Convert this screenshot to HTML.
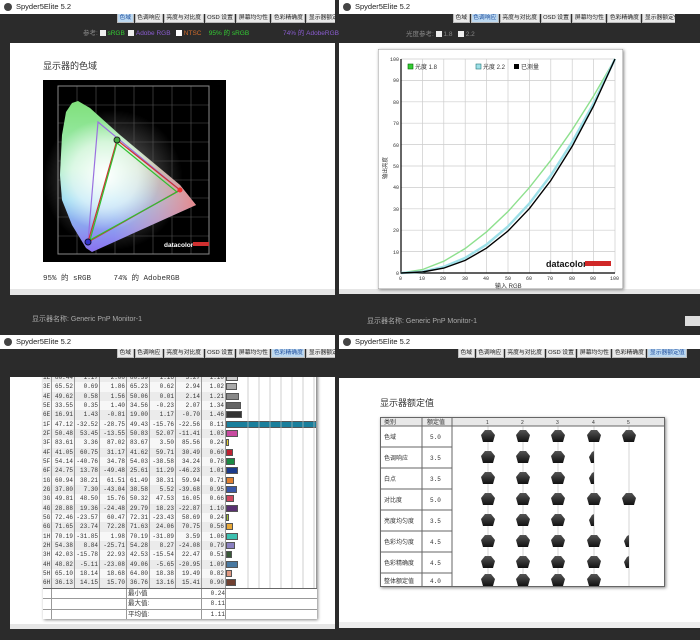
<!DOCTYPE html>
<html><head><meta charset="utf-8">
<style>
*{margin:0;padding:0;box-sizing:border-box}
body{width:700px;height:640px;background:#2b2b2b;position:relative;overflow:hidden;font-family:"Liberation Sans","Noto Sans CJK SC",sans-serif;color:#333}
.a{position:absolute}
.title{background:#fff;height:14px;font-size:7.5px;line-height:14px;color:#222;padding-left:16px}
.title:before{content:"";position:absolute;left:4px;top:3px;width:8px;height:8px;border-radius:50%;background:#444}
.tabs{display:flex;height:9px;font-size:5.8px;line-height:9px;white-space:nowrap;overflow:hidden}
.tabs span{flex:none;background:#e9e9e9;color:#222;margin-right:1px;padding:0 1.5px;border:1px solid #bbb;border-top:none;line-height:8px}
.tabs span.s{background:#bcd8f0;color:#1f4f9f}
.white{background:#fff}
.mono{font-family:"Liberation Mono","Noto Sans CJK SC",monospace}
.row{display:flex;height:9.33px;font-size:6px;line-height:9.33px;font-family:"Liberation Mono",monospace;color:#333}
.row span{border-right:1px solid #999;text-align:right;padding-right:1px;overflow:hidden}
.row:nth-child(odd){background:#ebebeb}
.row:nth-child(even){background:#f7f7f7}
.bar{position:relative;background:#fff;text-align:left!important}
.bar i{position:absolute;left:0;top:1px;height:7px;border:1px solid #555}
.lbl{color:#aaa;font-size:7px}
</style></head><body>

<!-- ===== TOP LEFT ===== -->
<div class="a title" style="left:0;top:0;width:335px">Spyder5Elite 5.2</div>
<div class="a tabs" style="left:117px;top:14px;width:218px"><span class="s">色域</span><span>色调响应</span><span>亮度与对比度</span><span>OSD 设置</span><span>屏幕均匀性</span><span>色彩精确度</span><span>显示器额定值</span></div>
<div class="a" style="left:83px;top:30px;font-size:6.5px;white-space:nowrap;color:#888;line-height:8px">参考: <b style="display:inline-block;width:6px;height:6px;background:#eee;vertical-align:-1px"></b> <span style="color:#3c3">sRGB</span>&nbsp;&nbsp;<b style="display:inline-block;width:6px;height:6px;background:#eee;vertical-align:-1px"></b> <span style="color:#8a5cd0">Adobe RGB</span>&nbsp;&nbsp;&nbsp;<b style="display:inline-block;width:6px;height:6px;background:#fff;vertical-align:-1px"></b> <span style="color:#d06a2a">NTSC</span>&nbsp;&nbsp;&nbsp;&nbsp;<span style="color:#3c3">95% 的 sRGB</span></div>
<div class="a" style="left:283px;top:30px;font-size:6.5px;color:#8a5cd0;line-height:8px;white-space:nowrap">74% 的 AdobeRGB</div>
<div class="a white" style="left:10px;top:43px;width:325px;height:247px"></div>
<div class="a" style="left:10px;top:289px;width:325px;height:6px;background:#e6e6e6"></div>
<div class="a" style="left:43px;top:59px;font-size:9px;color:#333">显示器的色域</div>
<svg class="a" style="left:43px;top:80px" width="183" height="182" viewBox="0 0 183 182">
<defs>
<linearGradient id="gv" x1="0" y1="0" x2="0" y2="1"><stop offset="0" stop-color="#7fe07a"/><stop offset=".45" stop-color="#a8eec0"/><stop offset=".65" stop-color="#8fd8f0"/><stop offset="1" stop-color="#8a70f0"/></linearGradient>
<linearGradient id="gh" x1="0" y1="0" x2="1" y2="0"><stop offset=".4" stop-color="#f0a0c0" stop-opacity="0"/><stop offset="1" stop-color="#f08080" stop-opacity=".9"/></linearGradient>
<radialGradient id="gw" cx="62" cy="95" r="55" gradientUnits="userSpaceOnUse"><stop offset="0" stop-color="#fff"/><stop offset=".6" stop-color="#fff" stop-opacity=".6"/><stop offset="1" stop-color="#fff" stop-opacity="0"/></radialGradient>
<radialGradient id="gg" cx="70" cy="100" r="70" gradientUnits="userSpaceOnUse"><stop offset="0" stop-color="#fff" stop-opacity=".5"/><stop offset="1" stop-color="#fff" stop-opacity="0"/></radialGradient>
</defs>
<rect width="183" height="182" fill="#000"/>
<circle cx="70" cy="100" r="70" fill="url(#gg)"/>
<g stroke="#555" stroke-width=".6">
<path d="M34 6V174M53 6V174M72 6V174M91 6V174M110 6V174M129 6V174M148 6V174M15 25H166M15 43H166M15 62H166M15 81H166M15 100H166M15 118H166M15 137H166M15 156H166"/>
</g>
<rect x="15" y="6" width="151" height="168" fill="none" stroke="#888"/>
<polygon points="17,95 19,55 23,32 29,23 35,21 47,28 77,55 107,80 137,105 153,125 49,172 43,168 29,145 19,120" fill="url(#gv)"/>
<polygon points="17,95 19,55 23,32 29,23 35,21 47,28 77,55 107,80 137,105 153,125 49,172 43,168 29,145 19,120" fill="url(#gh)"/>
<polygon points="17,95 19,55 23,32 29,23 35,21 47,28 77,55 107,80 137,105 153,125 49,172 43,168 29,145 19,120" fill="url(#gw)"/>
<polygon points="55,42 137,110 45,162" fill="none" stroke="#9a70e0" stroke-width="1.2"/>
<polygon points="74,60 137,110 45,162" fill="none" stroke="#d03030" stroke-width="1.2"/>
<polygon points="74,63 134,112 47,160" fill="none" stroke="#30c030" stroke-width="1.2"/>
<circle cx="74" cy="60" r="3" fill="#4a4" stroke="#222"/>
<circle cx="137" cy="110" r="2.5" fill="#e33"/>
<circle cx="45" cy="162" r="3" fill="#33c" stroke="#113"/>
<text x="121" y="167" font-size="6.5" font-weight="bold" fill="#fff" font-family="Liberation Sans">datacolor</text>
<rect x="150" y="162" width="16" height="4" fill="#d03030"/>
</svg>
<div class="a mono" style="left:43px;top:272px;font-size:7.5px;color:#333;white-space:pre">95% 的 sRGB     74% 的 AdobeRGB</div>
<div class="a lbl" style="left:32px;top:314px">显示器名称: Generic PnP Monitor-1</div>

<!-- ===== TOP RIGHT ===== -->
<div class="a title" style="left:339px;top:0;width:361px">Spyder5Elite 5.2</div>
<div class="a tabs" style="left:453px;top:14px;width:222px"><span>色域</span><span class="s">色调响应</span><span>亮度与对比度</span><span>OSD 设置</span><span>屏幕均匀性</span><span>色彩精确度</span><span>显示器额定值</span></div>
<div class="a" style="left:406px;top:31px;font-size:6.5px;color:#888;white-space:nowrap;line-height:8px">光度参考: <b style="display:inline-block;width:6px;height:6px;background:#eee;vertical-align:-1px"></b> 1.8 &nbsp; <b style="display:inline-block;width:6px;height:6px;background:#eee;vertical-align:-1px"></b> 2.2</div>
<div class="a white" style="left:339px;top:43px;width:361px;height:246px"></div>
<div class="a" style="left:339px;top:289px;width:361px;height:5px;background:#e6e6e6"></div>
<svg class="a" style="left:378px;top:49px;box-shadow:1px 1px 3px #888" width="245" height="240" viewBox="0 0 245 240">
<rect width="245" height="240" fill="#fff" stroke="#999"/>
<g stroke="#ccc" stroke-width=".7">
<path d="M44.4 10V224M65.8 10V224M87.2 10V224M108.6 10V224M130 10V224M151.4 10V224M172.8 10V224M194.2 10V224M215.6 10V224M237 10V224M23 31.4H237M23 52.8H237M23 74.2H237M23 95.6H237M23 117H237M23 138.4H237M23 159.8H237M23 181.2H237M23 202.6H237M23 10H237"/>
</g>
<path d="M23 10V224H237" fill="none" stroke="#000" stroke-width="1.2"/>
<polyline fill="none" stroke="#8ee08e" stroke-width="1.4" points="23,224 44.4,220.6 65.8,212.2 87.2,199.5 108.6,182.8 130,162.5 151.4,138.6 172.8,111.3 194.2,80.8 215.6,47 237,10"/>
<polyline fill="none" stroke="#9ee0e8" stroke-width="2.5" points="23,224 44.4,222.7 65.8,217.8 87.2,208.9 108.6,195.5 130,177.4 151.4,154.5 172.8,126.4 194.2,93 215.6,54.3 237,10"/>
<polyline fill="none" stroke="#000" stroke-width="1.4" points="23,224 44.4,223 65.8,219.1 87.2,211.4 108.6,199.1 130,182 151.4,159.6 172.8,131.5 194.2,97.3 215.6,56.9 237,10"/>
<g font-size="5" fill="#333" font-family="Liberation Mono">
<text x="12" y="12">100</text><text x="15" y="33">90</text><text x="15" y="55">80</text><text x="15" y="76">70</text><text x="15" y="98">60</text><text x="15" y="119">50</text><text x="15" y="140">40</text><text x="15" y="162">30</text><text x="15" y="183">20</text><text x="15" y="205">10</text><text x="18" y="226">0</text>
<text x="21" y="231">0</text><text x="41" y="231">10</text><text x="62" y="231">20</text><text x="84" y="231">30</text><text x="105" y="231">40</text><text x="127" y="231">50</text><text x="148" y="231">60</text><text x="169" y="231">70</text><text x="191" y="231">80</text><text x="212" y="231">90</text><text x="232" y="231">100</text>
</g>
<text x="117" y="239" font-size="6" fill="#333">输入 RGB</text>
<text x="0" y="0" font-size="5.5" fill="#333" transform="translate(9,130) rotate(-90)">输出亮度</text>
<rect x="30" y="15" width="5" height="5" fill="#3c3" stroke="#060" stroke-width=".6"/><text x="37" y="20" font-size="6" fill="#333">光度 1.8</text>
<rect x="98" y="15" width="5" height="5" fill="#9ee0e8" stroke="#277" stroke-width=".6"/><text x="105" y="20" font-size="6" fill="#333">光度 2.2</text>
<rect x="136" y="15" width="5" height="5" fill="#000"/><text x="143" y="20" font-size="6" fill="#333">已测量</text>
<text x="168" y="218" font-size="9" font-weight="bold" fill="#111">datacolor</text>
<rect x="207" y="212" width="26" height="5" fill="#d02828"/>
</svg>
<div class="a lbl" style="left:367px;top:316px">显示器名称: Generic PnP Monitor-1</div>
<div class="a" style="left:685px;top:316px;width:15px;height:10px;background:#ddd"></div>

<!-- ===== BOTTOM LEFT ===== -->
<div class="a title" style="left:0;top:335px;width:335px">Spyder5Elite 5.2</div>
<div class="a tabs" style="left:117px;top:349px;width:218px"><span>色域</span><span>色调响应</span><span>亮度与对比度</span><span>OSD 设置</span><span>屏幕均匀性</span><span class="s">色彩精确度</span><span>显示器额定值</span></div>
<div class="a white" style="left:10px;top:377px;width:325px;height:251px;overflow:hidden">
 <div class="a" style="left:33px;top:-4px;width:274px;box-shadow:1px 1px 3px #888">
 <div class="row"><span style="width:9px">1E</span><span style="width:23px">80.44</span><span style="width:25px">1.17</span><span style="width:27px">2.00</span><span style="width:23px">80.39</span><span style="width:26px">1.16</span><span style="width:26px">3.27</span><span style="width:24px">1.10</span><span class="bar" style="width:91px"><i style="width:12px;background:#ccc"></i></span></div>
 <div class="row"><span style="width:9px">3E</span><span style="width:23px">65.52</span><span style="width:25px">0.69</span><span style="width:27px">1.86</span><span style="width:23px">65.23</span><span style="width:26px">0.62</span><span style="width:26px">2.94</span><span style="width:24px">1.02</span><span class="bar" style="width:91px"><i style="width:11px;background:#aaa"></i></span></div>
 <div class="row"><span style="width:9px">4E</span><span style="width:23px">49.62</span><span style="width:25px">0.58</span><span style="width:27px">1.56</span><span style="width:23px">50.06</span><span style="width:26px">0.01</span><span style="width:26px">2.14</span><span style="width:24px">1.21</span><span class="bar" style="width:91px"><i style="width:13px;background:#888"></i></span></div>
 <div class="row"><span style="width:9px">5E</span><span style="width:23px">33.55</span><span style="width:25px">0.35</span><span style="width:27px">1.40</span><span style="width:23px">34.56</span><span style="width:26px">-0.23</span><span style="width:26px">2.07</span><span style="width:24px">1.34</span><span class="bar" style="width:91px"><i style="width:15px;background:#666"></i></span></div>
 <div class="row"><span style="width:9px">6E</span><span style="width:23px">16.91</span><span style="width:25px">1.43</span><span style="width:27px">-0.81</span><span style="width:23px">19.00</span><span style="width:26px">1.17</span><span style="width:26px">-0.70</span><span style="width:24px">1.46</span><span class="bar" style="width:91px"><i style="width:16px;background:#333"></i></span></div>
 <div class="row"><span style="width:9px">1F</span><span style="width:23px">47.12</span><span style="width:25px">-32.52</span><span style="width:27px">-28.75</span><span style="width:23px">49.43</span><span style="width:26px">-15.76</span><span style="width:26px">-22.56</span><span style="width:24px">8.11</span><span class="bar" style="width:91px"><i style="width:91px;background:#1a7f9c"></i></span></div>
 <div class="row"><span style="width:9px">2F</span><span style="width:23px">50.48</span><span style="width:25px">53.45</span><span style="width:27px">-13.55</span><span style="width:23px">50.83</span><span style="width:26px">52.07</span><span style="width:26px">-11.41</span><span style="width:24px">1.03</span><span class="bar" style="width:91px"><i style="width:12px;background:#c84aa0"></i></span></div>
 <div class="row"><span style="width:9px">3F</span><span style="width:23px">83.61</span><span style="width:25px">3.36</span><span style="width:27px">87.02</span><span style="width:23px">83.67</span><span style="width:26px">3.50</span><span style="width:26px">85.56</span><span style="width:24px">0.24</span><span class="bar" style="width:91px"><i style="width:3px;background:#e8d030"></i></span></div>
 <div class="row"><span style="width:9px">4F</span><span style="width:23px">41.05</span><span style="width:25px">60.75</span><span style="width:27px">31.17</span><span style="width:23px">41.62</span><span style="width:26px">59.71</span><span style="width:26px">30.49</span><span style="width:24px">0.60</span><span class="bar" style="width:91px"><i style="width:7px;background:#c02030"></i></span></div>
 <div class="row"><span style="width:9px">5F</span><span style="width:23px">54.14</span><span style="width:25px">-40.76</span><span style="width:27px">34.78</span><span style="width:23px">54.03</span><span style="width:26px">-38.58</span><span style="width:26px">34.24</span><span style="width:24px">0.78</span><span class="bar" style="width:91px"><i style="width:9px;background:#1a8a44"></i></span></div>
 <div class="row"><span style="width:9px">6F</span><span style="width:23px">24.75</span><span style="width:25px">13.78</span><span style="width:27px">-49.48</span><span style="width:23px">25.61</span><span style="width:26px">11.29</span><span style="width:26px">-46.23</span><span style="width:24px">1.01</span><span class="bar" style="width:91px"><i style="width:12px;background:#1a3a8a"></i></span></div>
 <div class="row"><span style="width:9px">1G</span><span style="width:23px">60.94</span><span style="width:25px">38.21</span><span style="width:27px">61.51</span><span style="width:23px">61.49</span><span style="width:26px">38.31</span><span style="width:26px">59.94</span><span style="width:24px">0.71</span><span class="bar" style="width:91px"><i style="width:8px;background:#e08030"></i></span></div>
 <div class="row"><span style="width:9px">2G</span><span style="width:23px">37.80</span><span style="width:25px">7.30</span><span style="width:27px">-43.04</span><span style="width:23px">38.58</span><span style="width:26px">5.52</span><span style="width:26px">-39.68</span><span style="width:24px">0.95</span><span class="bar" style="width:91px"><i style="width:11px;background:#3858a8"></i></span></div>
 <div class="row"><span style="width:9px">3G</span><span style="width:23px">49.81</span><span style="width:25px">48.50</span><span style="width:27px">15.76</span><span style="width:23px">50.32</span><span style="width:26px">47.53</span><span style="width:26px">16.05</span><span style="width:24px">0.66</span><span class="bar" style="width:91px"><i style="width:8px;background:#d04860"></i></span></div>
 <div class="row"><span style="width:9px">4G</span><span style="width:23px">28.88</span><span style="width:25px">19.36</span><span style="width:27px">-24.48</span><span style="width:23px">29.79</span><span style="width:26px">18.23</span><span style="width:26px">-22.87</span><span style="width:24px">1.10</span><span class="bar" style="width:91px"><i style="width:12px;background:#583070"></i></span></div>
 <div class="row"><span style="width:9px">5G</span><span style="width:23px">72.46</span><span style="width:25px">-23.57</span><span style="width:27px">60.47</span><span style="width:23px">72.31</span><span style="width:26px">-23.43</span><span style="width:26px">58.69</span><span style="width:24px">0.24</span><span class="bar" style="width:91px"><i style="width:3px;background:#a0c030"></i></span></div>
 <div class="row"><span style="width:9px">6G</span><span style="width:23px">71.65</span><span style="width:25px">23.74</span><span style="width:27px">72.28</span><span style="width:23px">71.63</span><span style="width:26px">24.06</span><span style="width:26px">70.75</span><span style="width:24px">0.56</span><span class="bar" style="width:91px"><i style="width:7px;background:#e8a838"></i></span></div>
 <div class="row"><span style="width:9px">1H</span><span style="width:23px">70.19</span><span style="width:25px">-31.85</span><span style="width:27px">1.98</span><span style="width:23px">70.19</span><span style="width:26px">-31.89</span><span style="width:26px">3.59</span><span style="width:24px">1.06</span><span class="bar" style="width:91px"><i style="width:12px;background:#3cc0b0"></i></span></div>
 <div class="row"><span style="width:9px">2H</span><span style="width:23px">54.38</span><span style="width:25px">8.84</span><span style="width:27px">-25.71</span><span style="width:23px">54.28</span><span style="width:26px">8.27</span><span style="width:26px">-24.08</span><span style="width:24px">0.79</span><span class="bar" style="width:91px"><i style="width:9px;background:#8a80c0"></i></span></div>
 <div class="row"><span style="width:9px">3H</span><span style="width:23px">42.03</span><span style="width:25px">-15.78</span><span style="width:27px">22.93</span><span style="width:23px">42.53</span><span style="width:26px">-15.54</span><span style="width:26px">22.47</span><span style="width:24px">0.51</span><span class="bar" style="width:91px"><i style="width:6px;background:#385838"></i></span></div>
 <div class="row"><span style="width:9px">4H</span><span style="width:23px">48.82</span><span style="width:25px">-5.11</span><span style="width:27px">-23.08</span><span style="width:23px">49.06</span><span style="width:26px">-5.65</span><span style="width:26px">-20.95</span><span style="width:24px">1.09</span><span class="bar" style="width:91px"><i style="width:12px;background:#4878a0"></i></span></div>
 <div class="row"><span style="width:9px">5H</span><span style="width:23px">65.10</span><span style="width:25px">18.14</span><span style="width:27px">18.68</span><span style="width:23px">64.80</span><span style="width:26px">18.38</span><span style="width:26px">19.49</span><span style="width:24px">0.82</span><span class="bar" style="width:91px"><i style="width:6px;background:#e09880"></i></span></div>
 <div class="row"><span style="width:9px">6H</span><span style="width:23px">36.13</span><span style="width:25px">14.15</span><span style="width:27px">15.70</span><span style="width:23px">36.76</span><span style="width:26px">13.16</span><span style="width:26px">15.41</span><span style="width:24px">0.90</span><span class="bar" style="width:91px"><i style="width:10px;background:#704030"></i></span></div>
 <div style="background:#fff;font-size:6.5px;line-height:9.5px;border-top:1px solid #666">
  <div style="display:flex;border-bottom:1px solid #999"><span style="width:9px;border-right:1px solid #999"></span><span style="width:75px;border-right:1px solid #999"></span><span style="width:75px;border-right:1px solid #999;padding-left:1px">最小值</span><span style="width:24px;border-right:1px solid #999;text-align:right;font-family:'Liberation Mono';font-size:6px">0.24</span></div>
  <div style="display:flex;border-bottom:1px solid #999"><span style="width:9px;border-right:1px solid #999"></span><span style="width:75px;border-right:1px solid #999"></span><span style="width:75px;border-right:1px solid #999;padding-left:1px">最大值:</span><span style="width:24px;border-right:1px solid #999;text-align:right;font-family:'Liberation Mono';font-size:6px">8.11</span></div>
  <div style="display:flex"><span style="width:9px;border-right:1px solid #999"></span><span style="width:75px;border-right:1px solid #999"></span><span style="width:75px;border-right:1px solid #999;padding-left:1px">平均值:</span><span style="width:24px;border-right:1px solid #999;text-align:right;font-family:'Liberation Mono';font-size:6px">1.11</span></div>
 </div>
 <svg class="a" style="left:183px;top:0" width="91" height="215"><g stroke="#bbb" stroke-width=".7"><path d="M22 0V215M33 0V215M44 0V215M55 0V215M66 0V215M77 0V215M88 0V215"/></g></svg>
 </div>
</div>
<div class="a" style="left:10px;top:624px;width:325px;height:5px;background:#e6e6e6"></div>

<!-- ===== BOTTOM RIGHT ===== -->
<div class="a title" style="left:339px;top:335px;width:361px">Spyder5Elite 5.2</div>
<div class="a tabs" style="left:458px;top:349px;width:230px"><span>色域</span><span>色调响应</span><span>亮度与对比度</span><span>OSD 设置</span><span>屏幕均匀性</span><span>色彩精确度</span><span class="s">显示器额定值</span></div>
<div class="a white" style="left:339px;top:378px;width:361px;height:250px"></div>
<div class="a" style="left:339px;top:622px;width:361px;height:6px;background:#eee"></div>
<div class="a" style="left:380px;top:396px;font-size:9px;color:#333">显示器额定值</div>
<svg class="a" style="left:380px;top:417px;box-shadow:1px 1px 3px #888" width="285" height="170" viewBox="0 0 285 170">
<defs>
<linearGradient id="ic" x1="0" y1="0" x2="0" y2="1"><stop offset="0" stop-color="#555"/><stop offset="1" stop-color="#111"/></linearGradient>
<g id="f"><polygon points="4,0 10,0 14,5 12,12 2,12 0,5" fill="url(#ic)"/></g>
<g id="h"><polygon points="5,1 7,0 7,12 4,12 2,6" fill="url(#ic)"/></g>
</defs>
<rect width="285" height="170" fill="#fff"/>
<rect width="285" height="9" fill="#e8e8e8"/>
<g stroke="#ccc" stroke-width=".8"><path d="M108 9V170M143 9V170M178 9V170M214 9V170M249 9V170"/></g>
<g stroke="#666" stroke-width="1" fill="none">
<rect x=".5" y=".5" width="284" height="169"/>
<path d="M42 0V170M72 0V170M0 9H285M0 30H72M0 51H72M0 72H72M0 93H72M0 114H72M0 135H72M0 156H72"/>
</g>
<g font-size="6" fill="#333" font-family="Liberation Sans,Noto Sans CJK SC">
<text x="4" y="7">类别</text><text x="47" y="7">额定值</text>
<text x="106" y="7" font-size="5">1</text><text x="141" y="7" font-size="5">2</text><text x="176" y="7" font-size="5">3</text><text x="212" y="7" font-size="5">4</text><text x="247" y="7" font-size="5">5</text>
<text x="4" y="22">色域</text><text x="4" y="43">色调响应</text><text x="4" y="64">白点</text><text x="4" y="85">对比度</text><text x="4" y="106">亮度均匀度</text><text x="4" y="127">色彩均匀度</text><text x="4" y="148">色彩精确度</text><text x="4" y="166">整体额定值</text>
</g>
<g font-size="6" fill="#333" font-family="Liberation Mono"><text x="50" y="22">5.0</text><text x="50" y="43">3.5</text><text x="50" y="64">3.5</text><text x="50" y="85">5.0</text><text x="50" y="106">3.5</text><text x="50" y="127">4.5</text><text x="50" y="148">4.5</text><text x="50" y="166">4.0</text></g>
<use href="#f" x="101" y="13"/><use href="#f" x="136" y="13"/><use href="#f" x="171" y="13"/><use href="#f" x="207" y="13"/><use href="#f" x="242" y="13"/>
<use href="#f" x="101" y="34"/><use href="#f" x="136" y="34"/><use href="#f" x="171" y="34"/><use href="#h" x="207" y="34"/>
<use href="#f" x="101" y="55"/><use href="#f" x="136" y="55"/><use href="#f" x="171" y="55"/><use href="#h" x="207" y="55"/>
<use href="#f" x="101" y="76"/><use href="#f" x="136" y="76"/><use href="#f" x="171" y="76"/><use href="#f" x="207" y="76"/><use href="#f" x="242" y="76"/>
<use href="#f" x="101" y="97"/><use href="#f" x="136" y="97"/><use href="#f" x="171" y="97"/><use href="#h" x="207" y="97"/>
<use href="#f" x="101" y="118"/><use href="#f" x="136" y="118"/><use href="#f" x="171" y="118"/><use href="#f" x="207" y="118"/><use href="#h" x="242" y="118"/>
<use href="#f" x="101" y="139"/><use href="#f" x="136" y="139"/><use href="#f" x="171" y="139"/><use href="#f" x="207" y="139"/><use href="#h" x="242" y="139"/>
<use href="#f" x="101" y="157"/><use href="#f" x="136" y="157"/><use href="#f" x="171" y="157"/><use href="#f" x="207" y="157"/>
</svg>
</body></html>
